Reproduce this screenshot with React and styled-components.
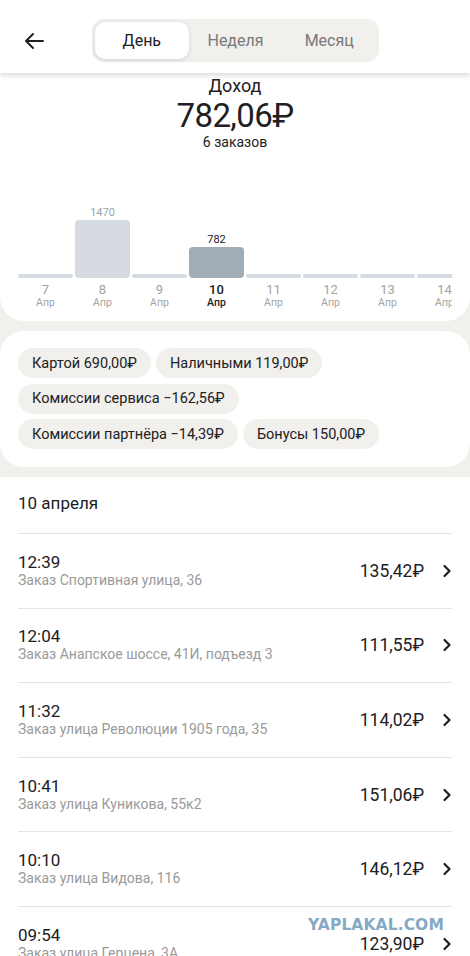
import React from "react";
import styled, { createGlobalStyle } from "styled-components";

const Global = createGlobalStyle`
  html, body { margin: 0; padding: 0; background: #f1f0ec; }
  body { font-family: Roboto, "Noto Sans", sans-serif; color: #21201f; -webkit-font-smoothing: antialiased; }
  * { box-sizing: border-box; }
`;

const Page = styled.div`
  width: 470px;
  height: 956px;
  overflow: hidden;
  position: relative;
  background: #f1f0ec;
`;

const TopCard = styled.section`
  background: #fff;
  border-radius: 0 0 24px 24px;
  padding-bottom: 12px;
`;

const Header = styled.header`
  height: 73px;
  display: flex;
  align-items: center;
  padding: 8px 0 0 22px;
  background: #fff;
  box-shadow: 0 3px 5px rgba(0, 0, 0, 0.13);
  position: relative;
  z-index: 1;
`;

const BackBtn = styled.div`
  width: 24px;
  height: 24px;
  display: flex;
  align-items: center;
  justify-content: center;
  margin-right: 46px;
`;

const Segmented = styled.div`
  display: flex;
  width: 287px;
  height: 43px;
  padding: 3px;
  border-radius: 12px;
  background: #f1f0ed;
`;

const Tab = styled.div`
  flex: 1;
  display: flex;
  align-items: center;
  justify-content: center;
  border-radius: 10px;
  font-size: 16px;
  color: ${(p) => (p.$active ? "#21201f" : "#7a7977")};
  background: ${(p) => (p.$active ? "#fff" : "transparent")};
  box-shadow: ${(p) => (p.$active ? "0 1px 4px rgba(0,0,0,0.14)" : "none")};
`;

const Summary = styled.div`
  display: flex;
  flex-direction: column;
  align-items: center;
  padding-top: 2px;
`;

const SumLabel = styled.div`
  font-size: 18px;
  line-height: 22px;
`;

const SumValue = styled.div`
  font-size: 33px;
  line-height: 37px;
  letter-spacing: -0.6px;
  font-weight: 400;
`;

const SumCount = styled.div`
  font-size: 14px;
  line-height: 16px;
`;

const Chart = styled.div`
  margin: 48px 18px 0 18px;
  overflow: hidden;
`;

const Slots = styled.div`
  display: flex;
  gap: 2px;
  width: max-content;
`;

const Slot = styled.div`
  width: 55px;
  flex: none;
  display: flex;
  flex-direction: column;
  align-items: center;
`;

const BarArea = styled.div`
  height: 80px;
  width: 100%;
  display: flex;
  flex-direction: column;
  justify-content: flex-end;
  align-items: center;
`;

const BarValue = styled.div`
  font-size: 11px;
  line-height: 13px;
  margin-bottom: 1px;
  color: ${(p) => (p.$active ? "#21201f" : "#9aa3ac")};
`;

const Bar = styled.div`
  width: 100%;
  border-radius: ${(p) => (p.$thin ? "2px" : "4px")};
  background: ${(p) => (p.$active ? "#a0adb7" : "#d5dbe0")};
`;

const DayNum = styled.div`
  margin-top: 4px;
  font-size: 13px;
  line-height: 15px;
  color: ${(p) => (p.$active ? "#21201f" : "#a3a3a3")};
  font-weight: ${(p) => (p.$active ? 500 : 400)};
`;

const DayMonth = styled.div`
  font-size: 10.5px;
  line-height: 12px;
  color: ${(p) => (p.$active ? "#21201f" : "#a3a3a3")};
  font-weight: ${(p) => (p.$active ? 500 : 400)};
`;

const ChipsCard = styled.section`
  margin-top: 10px;
  background: #fff;
  border-radius: 24px;
  padding: 17px 18px 18px;
  display: flex;
  flex-wrap: wrap;
  gap: 5.5px 5px;
`;

const Chip = styled.div`
  height: 30px;
  padding: 0 14px;
  border-radius: 15px;
  background: #f1f0ed;
  display: flex;
  align-items: center;
  font-size: 14.5px;
  color: #21201f;
`;

const List = styled.section`
  margin-top: 10px;
  background: #fff;
  padding: 0 18px;
`;

const DateHeader = styled.div`
  height: 57px;
  display: flex;
  align-items: center;
  padding-bottom: 5px;
  font-size: 17px;
  border-bottom: 1px solid #e3e3e3;
`;

const Row = styled.div`
  height: 74.6px;
  display: flex;
  align-items: center;
  border-bottom: 1px solid #e3e3e3;
`;

const RowText = styled.div`
  flex: 1;
  display: flex;
  flex-direction: column;
  margin-top: -1px;
`;

const Time = styled.div`
  font-size: 17px;
  line-height: 20px;
`;

const Address = styled.div`
  font-size: 14px;
  line-height: 17px;
  color: #9a9a9a;
`;

const Amount = styled.div`
  font-size: 17.5px;
  margin-right: 18px;
`;

const Watermark = styled.div`
  position: absolute;
  left: 308px;
  top: 917px;
  font-family: "DejaVu Sans", sans-serif;
  font-weight: 700;
  font-size: 15.5px;
  line-height: 16px;
  letter-spacing: 0.1px;
  color: #86a9c4;
`;

const days = [
  { d: 7, v: 0 },
  { d: 8, v: 1470 },
  { d: 9, v: 0 },
  { d: 10, v: 782, active: true },
  { d: 11, v: 0 },
  { d: 12, v: 0 },
  { d: 13, v: 0 },
  { d: 14, v: 0 },
];

const chips = [
  "Картой 690,00₽",
  "Наличными 119,00₽",
  "Комиссии сервиса −162,56₽",
  "Комиссии партнёра −14,39₽",
  "Бонусы 150,00₽",
];

const orders = [
  ["12:39", "Заказ Спортивная улица, 36", "135,42₽"],
  ["12:04", "Заказ Анапское шоссе, 41И, подъезд 3", "111,55₽"],
  ["11:32", "Заказ улица Революции 1905 года, 35", "114,02₽"],
  ["10:41", "Заказ улица Куникова, 55к2", "151,06₽"],
  ["10:10", "Заказ улица Видова, 116", "146,12₽"],
  ["09:54", "Заказ улица Герцена, 3А", "123,90₽"],
];

const Chevron = () => (
  <svg width="10" height="14" viewBox="0 0 10 14">
    <path d="M2.5 2 L7.5 7 L2.5 12" fill="none" stroke="#21201f" strokeWidth="2.2" strokeLinecap="round" strokeLinejoin="round" />
  </svg>
);

export default function App() {
  return (
    <Page>
      <Global />
      <TopCard>
        <Header>
          <BackBtn>
            <svg width="22" height="18" viewBox="0 0 22 18">
              <path d="M20 9 H3 M10 2 L3 9 L10 16" fill="none" stroke="#21201f" strokeWidth="2" strokeLinecap="round" strokeLinejoin="round" />
            </svg>
          </BackBtn>
          <Segmented>
            <Tab $active>День</Tab>
            <Tab>Неделя</Tab>
            <Tab>Месяц</Tab>
          </Segmented>
        </Header>
        <Summary>
          <SumLabel>Доход</SumLabel>
          <SumValue>782,06₽</SumValue>
          <SumCount>6 заказов</SumCount>
        </Summary>
        <Chart>
          <Slots>
            {days.map((x) => {
              const h = x.v ? Math.round((x.v / 1470) * 58) : 4;
              return (
                <Slot key={x.d}>
                  <BarArea>
                    {x.v > 0 && <BarValue $active={x.active}>{x.v}</BarValue>}
                    <Bar $active={x.active} $thin={!x.v} style={{ height: h }} />
                  </BarArea>
                  <DayNum $active={x.active}>{x.d}</DayNum>
                  <DayMonth $active={x.active}>Апр</DayMonth>
                </Slot>
              );
            })}
          </Slots>
        </Chart>
      </TopCard>
      <ChipsCard>
        {chips.map((c) => (
          <Chip key={c}>{c}</Chip>
        ))}
      </ChipsCard>
      <List>
        <DateHeader>10 апреля</DateHeader>
        {orders.map(([t, a, s]) => (
          <Row key={t}>
            <RowText>
              <Time>{t}</Time>
              <Address>{a}</Address>
            </RowText>
            <Amount>{s}</Amount>
            <Chevron />
          </Row>
        ))}
      </List>
      <Watermark>YAPLAKAL.COM</Watermark>
    </Page>
  );
}
